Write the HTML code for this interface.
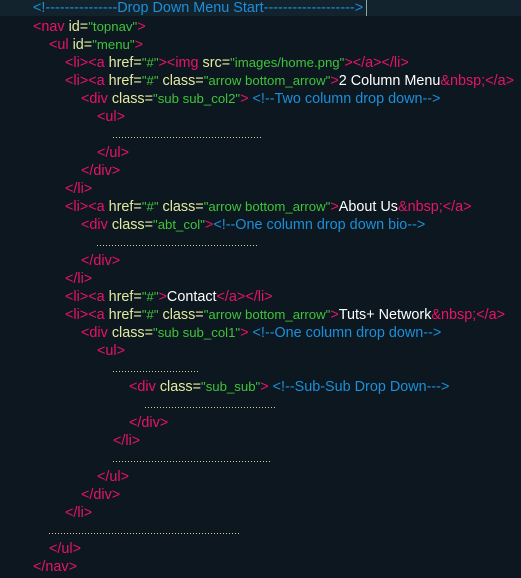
<!DOCTYPE html>
<html><head><meta charset="utf-8"><style>
html,body{margin:0;padding:0;}
body{width:521px;height:578px;background:#0c1720;position:relative;overflow:hidden;font-family:"Liberation Sans",Arial,sans-serif;font-size:14.4px;}
.hl{position:absolute;left:0;top:0;width:521px;height:16px;background:#13232e;}
.cur{position:absolute;left:366px;top:0;width:1px;height:16px;background:#8aa;}
.l{position:absolute;white-space:pre;line-height:18px;height:18px;margin-top:1px;}
.t{color:#e8136a}.a{color:#e2eba0}.v{color:#3fc43a;font-size:13.2px}.c{color:#1b8fd8}.w{color:#ffffff}
.d{position:absolute;height:1px;background:repeating-linear-gradient(90deg,#d8cf96 0 1px,transparent 1px 3px);}
</style></head><body>
<div class="hl"></div><div class="cur"></div>
<div class="l" style="left:33px;top:-2px"><span class="c">&lt;!---------------Drop Down Menu Start-------------------&gt;</span></div>
<div class="l" style="left:33px;top:17px"><span class="t">&lt;nav</span> <span class="a">id=</span><span class="v">"topnav"</span><span class="t">&gt;</span></div>
<div class="l" style="left:49px;top:35px"><span class="t">&lt;ul</span> <span class="a">id=</span><span class="v">"menu"</span><span class="t">&gt;</span></div>
<div class="l" style="left:65px;top:53px"><span class="t">&lt;li&gt;&lt;a</span> <span class="a">href=</span><span class="v">"#"</span><span class="t">&gt;&lt;img</span> <span class="a">src=</span><span class="v">"images/home.png"</span><span class="t">&gt;&lt;/a&gt;&lt;/li&gt;</span></div>
<div class="l" style="left:65px;top:71px"><span class="t">&lt;li&gt;&lt;a</span> <span class="a">href=</span><span class="v">"#"</span> <span class="a">class=</span><span class="v">"arrow bottom_arrow"</span><span class="t">&gt;</span><span class="w">2 Column Menu</span><span class="t">&amp;nbsp;&lt;/a&gt;</span></div>
<div class="l" style="left:81px;top:89px"><span class="t">&lt;div</span> <span class="a">class=</span><span class="v">"sub sub_col2"</span><span class="t">&gt;</span> <span class="c">&lt;!--Two column drop down--&gt;</span></div>
<div class="l" style="left:97px;top:107px"><span class="t">&lt;ul&gt;</span></div>
<div class="d" style="left:113px;top:137px;width:150px"></div>
<div class="l" style="left:97px;top:143px"><span class="t">&lt;/ul&gt;</span></div>
<div class="l" style="left:81px;top:161px"><span class="t">&lt;/div&gt;</span></div>
<div class="l" style="left:65px;top:179px"><span class="t">&lt;/li&gt;</span></div>
<div class="l" style="left:65px;top:197px"><span class="t">&lt;li&gt;&lt;a</span> <span class="a">href=</span><span class="v">"#"</span> <span class="a">class=</span><span class="v">"arrow bottom_arrow"</span><span class="t">&gt;</span><span class="w">About Us</span><span class="t">&amp;nbsp;&lt;/a&gt;</span></div>
<div class="l" style="left:81px;top:215px"><span class="t">&lt;div</span> <span class="a">class=</span><span class="v">"abt_col"</span><span class="t">&gt;</span><span class="c">&lt;!--One column drop down bio--&gt;</span></div>
<div class="d" style="left:97px;top:245px;width:162px"></div>
<div class="l" style="left:81px;top:251px"><span class="t">&lt;/div&gt;</span></div>
<div class="l" style="left:65px;top:269px"><span class="t">&lt;/li&gt;</span></div>
<div class="l" style="left:65px;top:287px"><span class="t">&lt;li&gt;&lt;a</span> <span class="a">href=</span><span class="v">"#"</span><span class="t">&gt;</span><span class="w">Contact</span><span class="t">&lt;/a&gt;&lt;/li&gt;</span></div>
<div class="l" style="left:65px;top:305px"><span class="t">&lt;li&gt;&lt;a</span> <span class="a">href=</span><span class="v">"#"</span> <span class="a">class=</span><span class="v">"arrow bottom_arrow"</span><span class="t">&gt;</span><span class="w">Tuts+ Network</span><span class="t">&amp;nbsp;&lt;/a&gt;</span></div>
<div class="l" style="left:81px;top:323px"><span class="t">&lt;div</span> <span class="a">class=</span><span class="v">"sub sub_col1"</span><span class="t">&gt;</span> <span class="c">&lt;!--One column drop down--&gt;</span></div>
<div class="l" style="left:97px;top:341px"><span class="t">&lt;ul&gt;</span></div>
<div class="d" style="left:113px;top:371px;width:86px"></div>
<div class="l" style="left:129px;top:377px"><span class="t">&lt;div</span> <span class="a">class=</span><span class="v">"sub_sub"</span><span class="t">&gt;</span> <span class="c">&lt;!--Sub-Sub Drop Down---&gt;</span></div>
<div class="d" style="left:145px;top:407px;width:130px"></div>
<div class="l" style="left:129px;top:413px"><span class="t">&lt;/div&gt;</span></div>
<div class="l" style="left:113px;top:431px"><span class="t">&lt;/li&gt;</span></div>
<div class="d" style="left:113px;top:461px;width:158px"></div>
<div class="l" style="left:97px;top:467px"><span class="t">&lt;/ul&gt;</span></div>
<div class="l" style="left:81px;top:485px"><span class="t">&lt;/div&gt;</span></div>
<div class="l" style="left:65px;top:503px"><span class="t">&lt;/li&gt;</span></div>
<div class="d" style="left:49px;top:533px;width:190px"></div>
<div class="l" style="left:49px;top:539px"><span class="t">&lt;/ul&gt;</span></div>
<div class="l" style="left:33px;top:557px"><span class="t">&lt;/nav&gt;</span></div>
</body></html>
